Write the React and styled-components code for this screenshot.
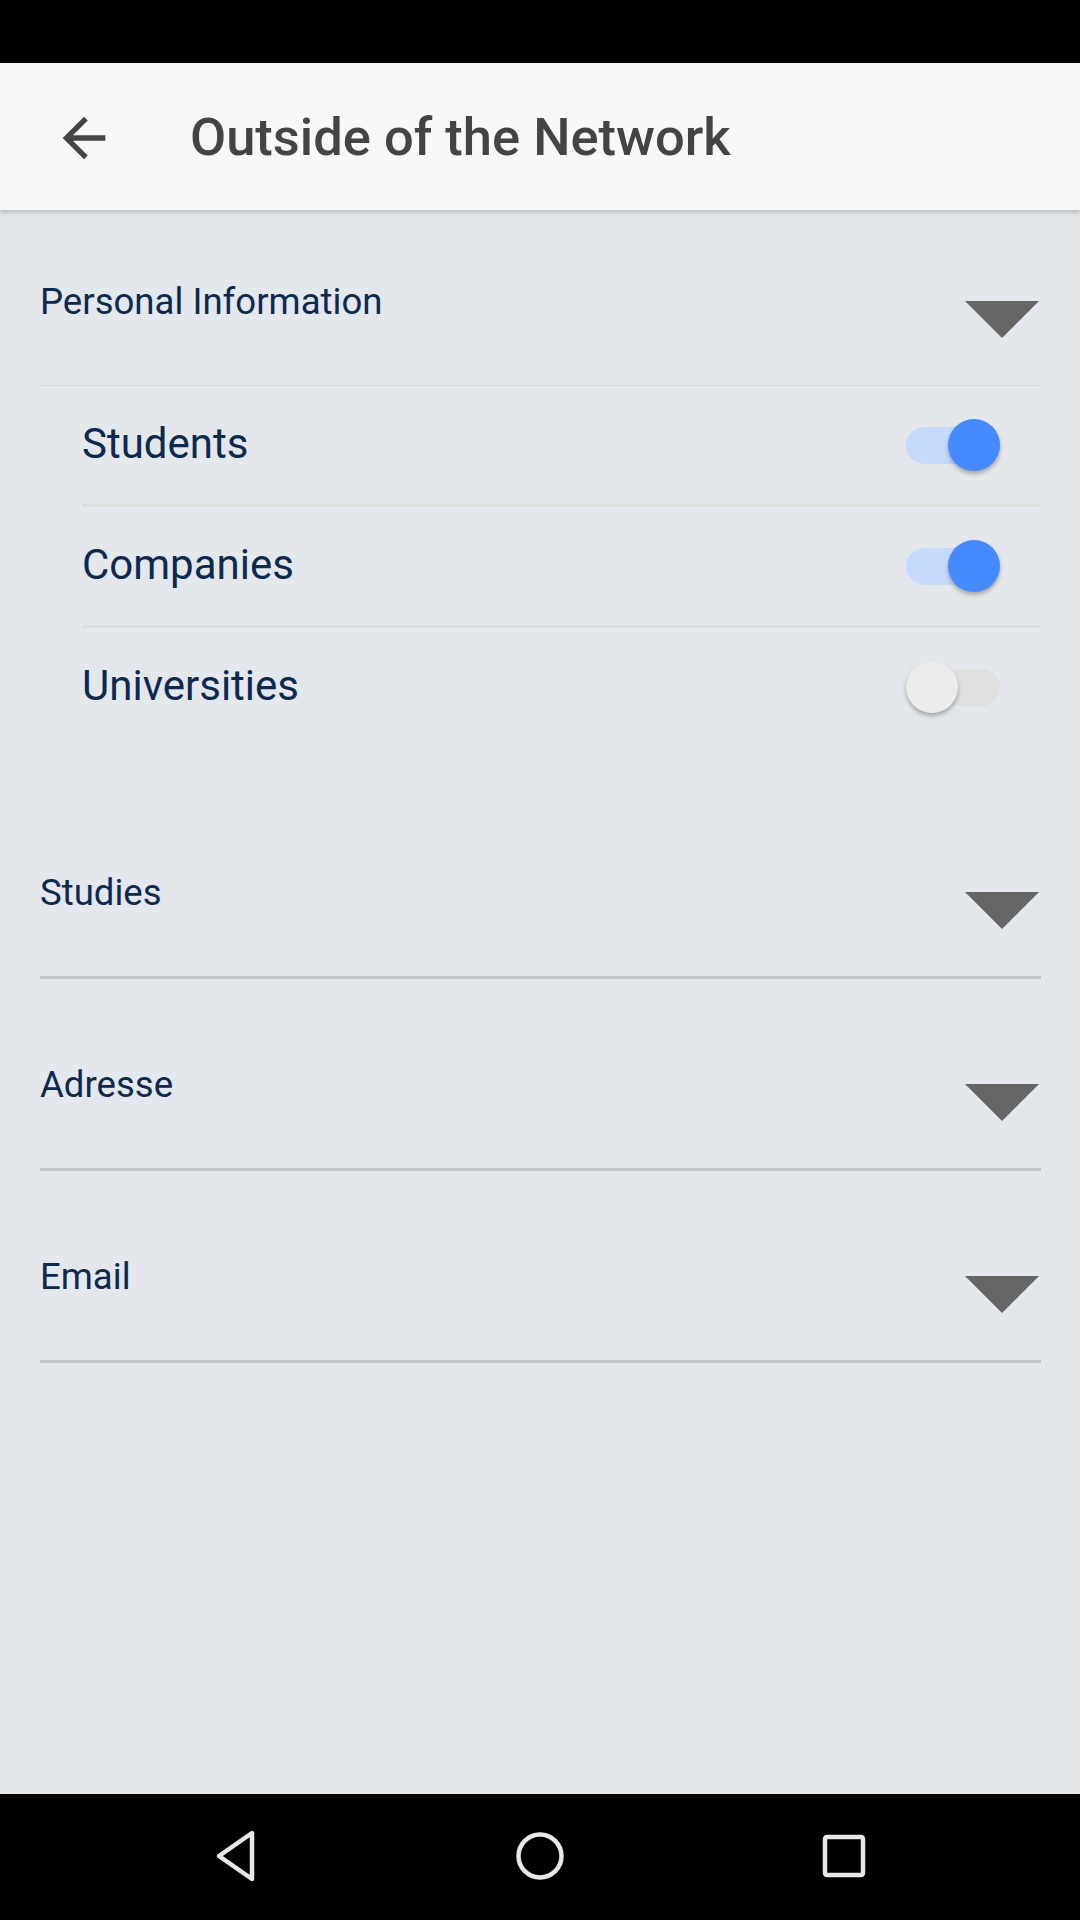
import styled, { createGlobalStyle } from "styled-components";

const GlobalStyle = createGlobalStyle`
  html, body {
    margin: 0;
    padding: 0;
    background: #e4e7ec;
    font-family: Roboto, "Noto Sans", sans-serif;
  }
`;

const Screen = styled.div`
  width: 1080px;
  height: 1920px;
  display: flex;
  flex-direction: column;
  background: #e4e7ec;
  overflow: hidden;
`;

const StatusBar = styled.div`
  height: 63px;
  background: #000;
  flex-shrink: 0;
`;

const AppBar = styled.header`
  height: 147px;
  flex-shrink: 0;
  display: flex;
  align-items: center;
  background: #f8f8f8;
  box-shadow: 0 2px 5px rgba(0, 0, 0, 0.22);
  position: relative;
  z-index: 1;
`;

const BackButton = styled.div`
  width: 64px;
  height: 64px;
  margin-left: 52px;
  margin-top: 2px;
  display: flex;
  color: #444;
`;

const Title = styled.h1`
  margin: 0 0 0 74px;
  font-size: 52.5px;
  font-weight: 500;
  color: #444;
`;

const Content = styled.main`
  flex: 1;
  padding: 0 39px 0 40px;
`;

const Section = styled.section`
  margin-top: ${(p) => (p.$first ? "0" : "14px")};
`;

const SectionHeader = styled.div`
  display: flex;
  justify-content: space-between;
  align-items: flex-start;
  height: 105px;
  padding-top: 70px;
  border-bottom: ${(p) => (p.$open ? "1px solid #d6d9de" : "3px solid #c3c5c7")};
`;

const SectionTitle = styled.span`
  font-size: 36.6px;
  line-height: 42px;
  margin-top: 1px;
  color: #0c2a4f;
`;

const Caret = styled.span`
  width: 0;
  height: 0;
  margin-top: 21px;
  margin-right: 2px;
  border-left: 37px solid transparent;
  border-right: 37px solid transparent;
  border-top: 37px solid #666;
`;

const OptionList = styled.div`
  padding-left: 42px;
  padding-bottom: 41px;
`;

const OptionRow = styled.div`
  height: 118px;
  display: flex;
  align-items: center;
  justify-content: space-between;
  border-bottom: ${(p) => (p.$last ? "none" : "3px solid #dcdcdd")};
`;

const OptionLabel = styled.span`
  font-size: 42px;
  line-height: 50px;
  margin-top: -2px;
  color: #0c2a4f;
`;

const Switch = styled.div`
  position: relative;
  width: 94px;
  height: 52px;
  margin-right: 41px;
`;

const Track = styled.div`
  position: absolute;
  left: 0;
  right: 0;
  top: 8px;
  height: 37px;
  border-radius: 19px;
  background: ${(p) => (p.$on ? "#c6dafd" : "#dfdfdf")};
`;

const Thumb = styled.div`
  position: absolute;
  top: 0;
  left: ${(p) => (p.$on ? "42px" : "0")};
  width: 52px;
  height: 52px;
  border-radius: 50%;
  background: ${(p) => (p.$on ? "#468aff" : "#ececec")};
  box-shadow: 0 3px 4px rgba(0, 0, 0, 0.28);
`;

const NavBar = styled.nav`
  height: 126px;
  flex-shrink: 0;
  background: #000;
  display: flex;
  align-items: center;
  justify-content: center;
`;

const NavSlot = styled.div`
  width: 304px;
  display: flex;
  justify-content: center;
  margin-top: -2px;
`;

function Toggle({ on }) {
  return (
    <Switch>
      <Track $on={on} />
      <Thumb $on={on} />
    </Switch>
  );
}

const options = [
  { label: "Students", on: true },
  { label: "Companies", on: true },
  { label: "Universities", on: false },
];

const collapsed = ["Studies", "Adresse", "Email"];

export default function App() {
  return (
    <Screen>
      <GlobalStyle />
      <StatusBar />
      <AppBar>
        <BackButton>
          <svg width="64" height="64" viewBox="0 0 24 24" fill="currentColor">
            <path d="M20 11H7.83l5.59-5.59L12 4l-8 8 8 8 1.41-1.41L7.83 13H20v-2z" />
          </svg>
        </BackButton>
        <Title>Outside of the Network</Title>
      </AppBar>
      <Content>
        <Section $first>
          <SectionHeader $open>
            <SectionTitle>Personal Information</SectionTitle>
            <Caret />
          </SectionHeader>
          <OptionList>
            {options.map((o, i) => (
              <OptionRow key={o.label} $last={i === options.length - 1}>
                <OptionLabel>{o.label}</OptionLabel>
                <Toggle on={o.on} />
              </OptionRow>
            ))}
          </OptionList>
        </Section>
        {collapsed.map((name) => (
          <Section key={name}>
            <SectionHeader>
              <SectionTitle>{name}</SectionTitle>
              <Caret />
            </SectionHeader>
          </Section>
        ))}
      </Content>
      <NavBar>
        <NavSlot>
          <svg width="46" height="54" viewBox="0 0 46 54">
            <path
              d="M39 4 L39 50 L6 27 Z"
              fill="none"
              stroke="#e8e8e8"
              strokeWidth="4.5"
              strokeLinejoin="round"
            />
          </svg>
        </NavSlot>
        <NavSlot>
          <svg width="52" height="52" viewBox="0 0 52 52">
            <circle cx="26" cy="26" r="21.5" fill="none" stroke="#e8e8e8" strokeWidth="4.5" />
          </svg>
        </NavSlot>
        <NavSlot>
          <svg width="48" height="48" viewBox="0 0 48 48">
            <rect x="5" y="5" width="38" height="38" rx="2" fill="none" stroke="#e8e8e8" strokeWidth="4.5" />
          </svg>
        </NavSlot>
      </NavBar>
    </Screen>
  );
}
